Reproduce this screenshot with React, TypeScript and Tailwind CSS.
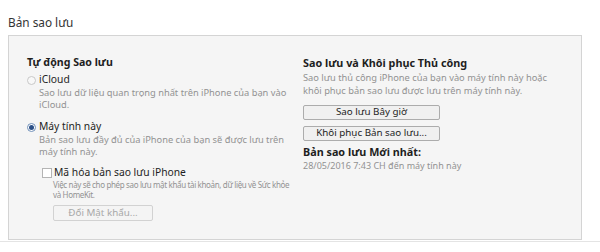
export default function App() {
  const font = { fontFamily: '"Noto Sans", "Open Sans", sans-serif' };
  return (
    <div className="w-[600px] h-[252px] bg-white overflow-hidden whitespace-nowrap" style={font}>
      <div className="pl-[8px] pt-[14px] h-[30px] text-[11.8px] leading-[16px] text-[#333]">Bản sao lưu</div>

      <div className="ml-[8px] mt-[5px] w-[574px] h-[205px] border border-[#d4d4d4] bg-[#f5f5f5] flex pt-[20px]">
        {/* left column */}
        <div className="w-[294px] pl-[18px] flex flex-col">
          <div className="h-[14px] flex items-center text-[10.6px] font-bold text-[#1e1e1e]">Tự động Sao lưu</div>

          <div className="flex items-center mt-[3px] h-[14px]">
            <span className="w-[9px] h-[9px] rounded-full border border-[#c8c8c8] bg-[#f8f8f8]" />
            <span className="ml-[3px] text-[10.3px] text-[#1e1e1e]">iCloud</span>
          </div>
          <div className="pl-[12px] text-[9.3px] leading-[12px] text-[#929292]">
            Sao lưu dữ liệu quan trọng nhất trên iPhone của bạn vào
            <br />
            iCloud.
          </div>

          <div className="flex items-center mt-[9px] h-[14px]">
            <span className="w-[9px] h-[9px] rounded-full border border-[#6f8fb8] bg-white flex items-center justify-center">
              <span className="w-[5px] h-[5px] rounded-full bg-[#2b4f86]" />
            </span>
            <span className="ml-[3px] text-[10.3px] text-[#1e1e1e]">Máy tính này</span>
          </div>
          <div className="pl-[12px] text-[9.3px] leading-[12px] text-[#929292]">
            Bản sao lưu đầy đủ của iPhone của bạn sẽ được lưu trên
            <br />
            máy tính này.
          </div>

          <div className="pl-[15px] mt-[8px] flex items-center h-[14px]">
            <span className="w-[10px] h-[10px] border border-[#b4b4b4] bg-white" />
            <span className="ml-[2px] text-[10.3px] text-[#1e1e1e]">Mã hóa bản sao lưu iPhone</span>
          </div>
          <div className="pl-[26px] text-[8px] leading-[10px] text-[#929292] tracking-[-0.35px]">
            Việc này sẽ cho phép sao lưu mật khẩu tài khoản, dữ liệu về Sức khỏe
            <br />
            và HomeKit.
          </div>
          <div className="pl-[26px] mt-[5px]">
            <div className="w-[100px] h-[16px] border border-[#d2d2d2] bg-[#f4f4f4] rounded-[2px] flex items-center justify-center text-[9.8px] text-[#a8a8a8]">
              Đổi Mật khẩu...
            </div>
          </div>
        </div>

        {/* right column */}
        <div className="flex-1 flex flex-col">
          <div className="h-[14px] flex items-center text-[10.8px] font-bold text-[#1e1e1e]">Sao lưu và Khôi phục Thủ công</div>
          <div className="mt-[1px] text-[9.3px] leading-[13px] text-[#929292]">
            Sao lưu thủ công iPhone của bạn vào máy tính này hoặc
            <br />
            khôi phục bản sao lưu được lưu trên máy tính này.
          </div>
          <div className="mt-[8px] w-[137px] h-[15px] border border-[#acacac] bg-[#f0f0f0] rounded-[2px] flex items-center justify-center text-[9.8px] text-[#1e1e1e]">
            Sao lưu Bây giờ
          </div>
          <div className="mt-[6px] w-[137px] h-[15px] border border-[#acacac] bg-[#f0f0f0] rounded-[2px] flex items-center justify-center text-[9.8px] text-[#1e1e1e]">
            Khôi phục Bản sao lưu...
          </div>
          <div className="mt-[4px] h-[14px] flex items-center text-[10.8px] font-bold text-[#1e1e1e]">Bản sao lưu Mới nhất:</div>
          <div className="h-[13px] flex items-center text-[9px] text-[#929292]">28/05/2016 7:43 CH đến máy tính này</div>
        </div>
      </div>

      <div className="mt-[1px] h-px w-full bg-[#e4e4e4]" />
    </div>
  );
}
